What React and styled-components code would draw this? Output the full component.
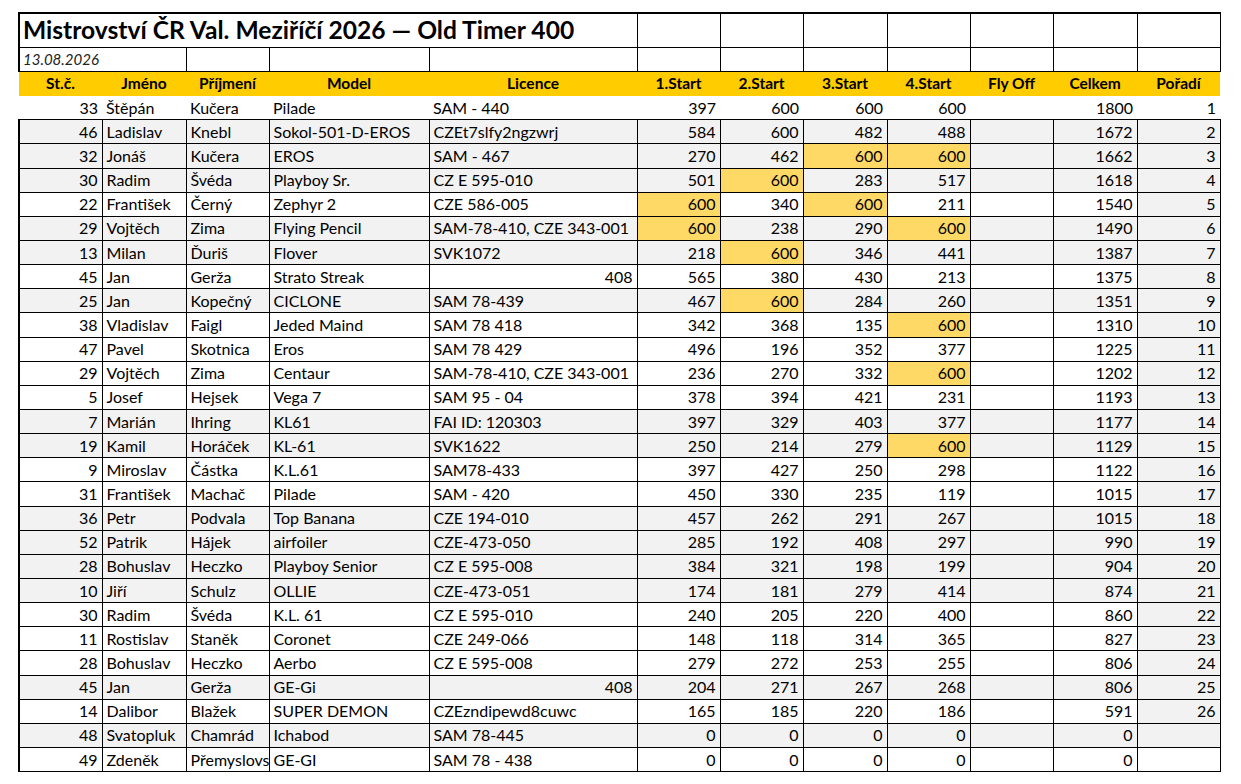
import styled, { createGlobalStyle, css } from "styled-components";

const GlobalStyle = createGlobalStyle`
  body {
    margin: 0;
    background: #ffffff;
    font-family: Lato, "Open Sans", "Liberation Sans", sans-serif;
    color: #000000;
  }
`;

const COLS = [83, 84, 83, 160, 208, 83, 83, 84, 83, 83, 84, 83];

// [St.č., Jméno, Příjmení, Model, Licence, starts, Celkem, Pořadí, grey row, highlighted starts]
const ROWS = [
  [33, "Štěpán", "Kučera", "Pilade", "SAM - 440", [397, 600, 600, 600], 1800, 1, false, []],
  [46, "Ladislav", "Knebl", "Sokol-501-D-EROS", "CZEt7slfy2ngzwrj", [584, 600, 482, 488], 1672, 2, true, []],
  [32, "Jonáš", "Kučera", "EROS", "SAM - 467", [270, 462, 600, 600], 1662, 3, true, [2, 3]],
  [30, "Radim", "Švéda", "Playboy Sr.", "CZ E 595-010", [501, 600, 283, 517], 1618, 4, true, [1]],
  [22, "František", "Černý", "Zephyr 2", "CZE 586-005", [600, 340, 600, 211], 1540, 5, false, [0, 2]],
  [29, "Vojtěch", "Zima", "Flying Pencil", "SAM-78-410, CZE 343-001", [600, 238, 290, 600], 1490, 6, true, [0, 3]],
  [13, "Milan", "Ďuriš", "Flover", "SVK1072", [218, 600, 346, 441], 1387, 7, true, [1]],
  [45, "Jan", "Gerža", "Strato Streak", 408, [565, 380, 430, 213], 1375, 8, false, []],
  [25, "Jan", "Kopečný", "CICLONE", "SAM 78-439", [467, 600, 284, 260], 1351, 9, true, [1]],
  [38, "Vladislav", "Faigl", "Jeded Maind", "SAM 78 418", [342, 368, 135, 600], 1310, 10, false, [3]],
  [47, "Pavel", "Skotnica", "Eros", "SAM 78 429", [496, 196, 352, 377], 1225, 11, false, []],
  [29, "Vojtěch", "Zima", "Centaur", "SAM-78-410, CZE 343-001", [236, 270, 332, 600], 1202, 12, false, [3]],
  [5, "Josef", "Hejsek", "Vega 7", "SAM 95 - 04", [378, 394, 421, 231], 1193, 13, false, []],
  [7, "Marián", "Ihring", "KL61", "FAI ID: 120303", [397, 329, 403, 377], 1177, 14, true, []],
  [19, "Kamil", "Horáček", "KL-61", "SVK1622", [250, 214, 279, 600], 1129, 15, true, [3]],
  [9, "Miroslav", "Částka", "K.L.61", "SAM78-433", [397, 427, 250, 298], 1122, 16, false, []],
  [31, "František", "Machač", "Pilade", "SAM - 420", [450, 330, 235, 119], 1015, 17, false, []],
  [36, "Petr", "Podvala", "Top Banana", "CZE 194-010", [457, 262, 291, 267], 1015, 18, true, []],
  [52, "Patrik", "Hájek", "airfoiler", "CZE-473-050", [285, 192, 408, 297], 990, 19, true, []],
  [28, "Bohuslav", "Heczko", "Playboy Senior", "CZ E 595-008", [384, 321, 198, 199], 904, 20, true, []],
  [10, "Jiří", "Schulz", "OLLIE", "CZE-473-051", [174, 181, 279, 414], 874, 21, true, []],
  [30, "Radim", "Švéda", "K.L. 61", "CZ E 595-010", [240, 205, 220, 400], 860, 22, false, []],
  [11, "Rostislav", "Staněk", "Coronet", "CZE 249-066", [148, 118, 314, 365], 827, 23, false, []],
  [28, "Bohuslav", "Heczko", "Aerbo", "CZ E 595-008", [279, 272, 253, 255], 806, 24, false, []],
  [45, "Jan", "Gerža", "GE-Gi", 408, [204, 271, 267, 268], 806, 25, true, []],
  [14, "Dalibor", "Blažek", "SUPER DEMON", "CZEzndipewd8cuwc", [165, 185, 220, 186], 591, 26, false, []],
  [48, "Svatopluk", "Chamrád", "Ichabod", "SAM 78-445", [0, 0, 0, 0], 0, "", true, []],
  [49, "Zdeněk", "Přemyslovský", "GE-GI", "SAM 78 - 438", [0, 0, 0, 0], 0, "", false, []],
];

const HEADERS = [
  "St.č.", "Jméno", "Příjmení", "Model", "Licence",
  "1.Start", "2.Start", "3.Start", "4.Start", "Fly Off", "Celkem", "Pořadí",
];

const Page = styled.div`
  padding: 12px 0 0 18px;
`;

const Sheet = styled.table`
  border-collapse: collapse;
  table-layout: fixed;
  width: ${COLS.reduce((a, b) => a + b, 0)}px;
  font-size: 16px;
  line-height: 1;
`;

const Cell = styled.td`
  border: 1px solid #000000;
  padding: 0 4px;
  height: 23.15px;
  white-space: nowrap;
  overflow: hidden;
  text-overflow: clip;
  text-align: ${({ $align }) => $align || "left"};
  background: ${({ $bg }) => $bg || "transparent"};
  ${({ $bare }) =>
    $bare &&
    css`
      border: none;
    `}
`;

const TitleCell = styled(Cell)`
  height: 33px;
  font-size: 24.6px;
  font-weight: 700;
  padding-left: 3px;
  border-top-width: 2px;
  border-left-width: 2px;
`;

const EmptyTop = styled(Cell)`
  height: 33px;
  border-top-width: 2px;
`;

const DateCell = styled(Cell)`
  font-style: italic;
  font-size: 15px;
  color: #222222;
  padding-left: 3px;
  border-left-width: 2px;
`;

const HeadRow = styled.tr`
  background: #ffcc00;
`;

const HeadCell = styled.th`
  height: 24px;
  padding: 0;
  border: none;
  font-weight: 700;
  font-size: 15.5px;
  text-align: center;
  white-space: nowrap;
`;

const Row = styled.tr`
  & > td:first-child {
    border-left-width: ${({ $bare }) => ($bare ? 0 : 2)}px;
  }
`;

const GREY = "#f2f2f2";
const GOLD = "#ffd966";

function DataRow({ row, first, last }) {
  const [stc, jmeno, prijmeni, model, licence, starts, celkem, poradi, grey, hl] = row;
  const bg = grey ? GREY : "#ffffff";
  const bare = first;
  const rankBg = first || last ? "#ffffff" : GREY;
  return (
    <Row $bare={bare}>
      <Cell $bare={bare} $bg={bg} $align="right">{stc}</Cell>
      <Cell $bare={bare} $bg={bg}>{jmeno}</Cell>
      <Cell $bare={bare} $bg={bg}>{prijmeni}</Cell>
      <Cell $bare={bare} $bg={bg}>{model}</Cell>
      <Cell $bare={bare} $bg={bg} $align={typeof licence === "number" ? "right" : "left"}>
        {licence}
      </Cell>
      {starts.map((s, i) => (
        <Cell key={i} $bare={bare} $bg={hl.includes(i) ? GOLD : bg} $align="right">
          {s}
        </Cell>
      ))}
      <Cell $bare={bare} $bg={bg} />
      <Cell $bare={bare} $bg={bg} $align="right">{celkem}</Cell>
      <Cell $bare={bare} $bg={rankBg} $align="right">{poradi}</Cell>
    </Row>
  );
}

export default function App() {
  return (
    <Page>
      <GlobalStyle />
      <Sheet>
        <colgroup>
          {COLS.map((w, i) => (
            <col key={i} style={{ width: w }} />
          ))}
        </colgroup>
        <tbody>
          <tr>
            <TitleCell colSpan={5}>Mistrovství ČR Val. Meziříčí 2026 — Old Timer 400</TitleCell>
            {Array.from({ length: 7 }).map((_, i) => (
              <EmptyTop key={i} />
            ))}
          </tr>
          <tr>
            <DateCell colSpan={2}>13.08.2026</DateCell>
            {Array.from({ length: 10 }).map((_, i) => (
              <Cell key={i} />
            ))}
          </tr>
          <HeadRow>
            {HEADERS.map((h) => (
              <HeadCell key={h}>{h}</HeadCell>
            ))}
          </HeadRow>
          {ROWS.map((row, i) => (
            <DataRow key={i} row={row} first={i === 0} last={i === ROWS.length - 1} />
          ))}
        </tbody>
      </Sheet>
    </Page>
  );
}
